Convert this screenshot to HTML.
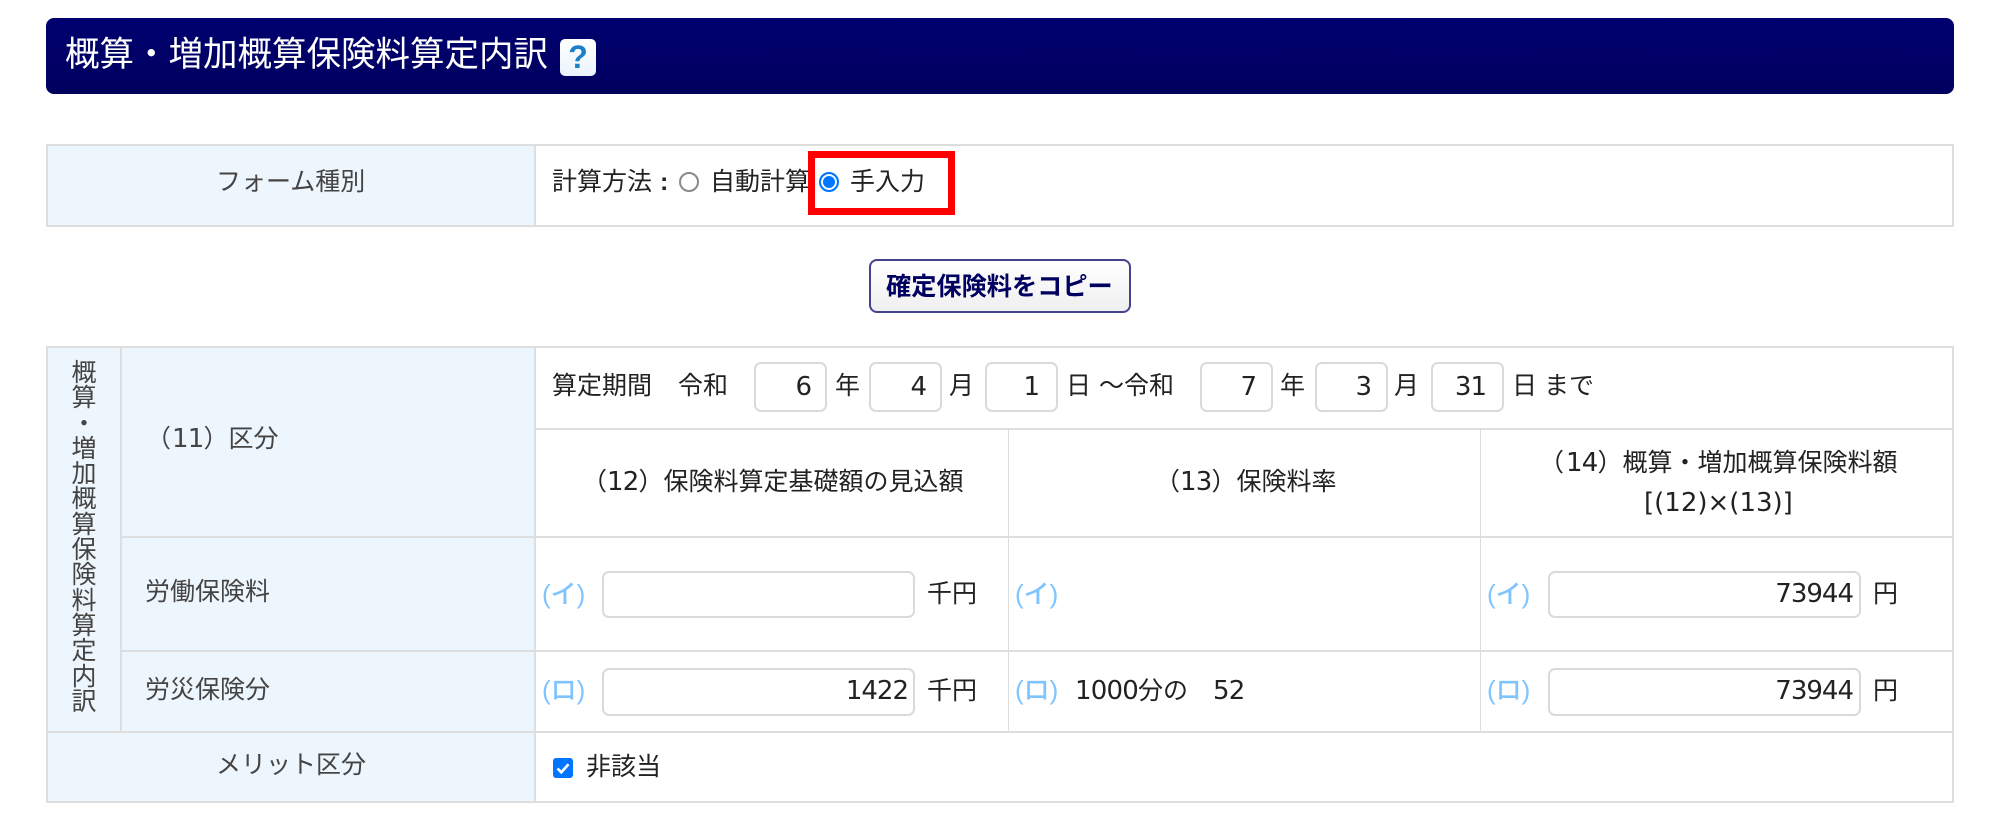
<!DOCTYPE html>
<html lang="ja">
<head>
<meta charset="utf-8">
<title>概算・増加概算保険料算定内訳</title>
<style>
html,body{margin:0;padding:0;background:#fff;width:2000px;height:825px;overflow:hidden}
body{position:relative;font-family:"Liberation Sans","Noto Sans CJK JP",sans-serif;color:#222;font-size:25px}
.t{position:absolute;line-height:40px;height:40px;white-space:pre}
.g{color:#444}
.n{font-family:"DejaVu Sans","Noto Sans CJK JP",sans-serif;font-size:26px;letter-spacing:-.8px}
.b{position:absolute;background:#dedede}
.bg{position:absolute;background:#eef6fd}
.i{position:absolute;box-sizing:border-box;background:#fff;border:2px solid #dadada;border-radius:7px}
.v{position:absolute;line-height:40px;height:40px;text-align:right;font-family:"DejaVu Sans",sans-serif;font-size:26px;letter-spacing:-1px;white-space:pre}
.l{position:absolute;line-height:40px;height:40px;color:#7fc4ff;font-size:26px;font-weight:500;white-space:pre}
</style>
</head>
<body>
<!-- header -->
<div style="position:absolute;left:46px;top:18px;width:1908px;height:76px;border-radius:8px;background:linear-gradient(#000070,#00005e)"></div>
<div class="t" style="left:65px;top:35px;color:#fff;font-size:34.5px">概算・増加概算保険料算定内訳</div>
<div style="position:absolute;left:560px;top:39px;width:36px;height:37px;border-radius:5px;background:linear-gradient(#fff,#eaf3fb);color:#1a80c8;font:bold 32px/37px 'Liberation Sans',sans-serif;text-align:center">?</div>

<!-- form type table -->
<div class="bg" style="left:46px;top:144px;width:488px;height:82px"></div>
<div class="b" style="left:46px;top:144px;width:1908px;height:2px"></div>
<div class="b" style="left:46px;top:225px;width:1908px;height:2px"></div>
<div class="b" style="left:46px;top:144px;width:2px;height:83px"></div>
<div class="b" style="left:1952px;top:144px;width:2px;height:83px"></div>
<div class="b" style="left:534px;top:144px;width:2px;height:83px;background:#d5e0e8"></div>
<div class="t g" style="left:216px;top:162px">フォーム種別</div>
<div class="t" style="left:552px;top:162px">計算方法 <span style="font-weight:700;margin-left:1px">:</span></div>
<div style="position:absolute;left:679px;top:172px;width:20px;height:20px;box-sizing:border-box;border:2px solid #8a8a8a;border-radius:50%"></div>
<div class="t" style="left:710px;top:162px">自動計算</div>
<div style="position:absolute;left:819px;top:172px;width:20px;height:20px;box-sizing:border-box;border:2px solid #0075ff;border-radius:50%;background:#0075ff;box-shadow:inset 0 0 0 2px #fff"></div>
<div class="t" style="left:850px;top:162px">手入力</div>
<div style="position:absolute;left:808px;top:151px;width:147px;height:64px;box-sizing:border-box;border:7px solid #f00"></div>

<!-- copy button -->
<div style="position:absolute;left:869px;top:259px;width:262px;height:54px;box-sizing:border-box;border:2px solid #44448e;border-radius:8px;background:linear-gradient(#fff,#efefef)"></div>
<div class="t" style="left:886px;top:267px;color:#000060;font-weight:700;font-size:25.2px">確定保険料をコピー</div>

<!-- main table backgrounds -->
<div class="bg" style="left:46px;top:346px;width:488px;height:456px"></div>
<!-- horizontal lines -->
<div class="b" style="left:46px;top:346px;width:1908px;height:2px"></div>
<div class="b" style="left:534px;top:428px;width:1420px;height:2px"></div>
<div class="b" style="left:120px;top:536px;width:1834px;height:2px"></div>
<div class="b" style="left:120px;top:650px;width:1834px;height:2px"></div>
<div class="b" style="left:46px;top:731px;width:1908px;height:2px"></div>
<div class="b" style="left:46px;top:801px;width:1908px;height:2px"></div>
<!-- vertical lines -->
<div class="b" style="left:46px;top:346px;width:2px;height:457px"></div>
<div class="b" style="left:1952px;top:346px;width:2px;height:457px"></div>
<div class="b" style="left:120px;top:346px;width:2px;height:386px"></div>
<div class="b" style="left:534px;top:346px;width:2px;height:457px;background:#d5e0e8"></div>
<div class="b" style="left:1008px;top:429px;width:1px;height:303px"></div>
<div class="b" style="left:1480px;top:429px;width:1px;height:303px"></div>

<!-- left column labels -->
<div style="position:absolute;left:71px;top:361px;width:26px;line-height:25.3px;color:#444;text-align:center">概<br>算<br>・<br>増<br>加<br>概<br>算<br>保<br>険<br>料<br>算<br>定<br>内<br>訳</div>
<div class="t g" style="left:146px;top:419px"><span style="letter-spacing:1px">（</span><span class="n">11</span>）区分</div>
<div class="t g" style="left:145px;top:572px">労働保険料</div>
<div class="t g" style="left:145px;top:670px">労災保険分</div>
<div class="t g" style="left:216px;top:745px">メリット区分</div>

<!-- period row -->
<div class="t" style="left:552px;top:366px">算定期間</div>
<div class="t" style="left:678px;top:366px">令和</div>
<div class="i" style="left:754px;top:362px;width:73px;height:50px"></div>
<div class="v" style="left:754px;top:367px;width:57px">6</div>
<div class="t" style="left:835px;top:366px">年</div>
<div class="i" style="left:869px;top:362px;width:73px;height:50px"></div>
<div class="v" style="left:869px;top:367px;width:57px">4</div>
<div class="t" style="left:949px;top:366px">月</div>
<div class="i" style="left:985px;top:362px;width:73px;height:50px"></div>
<div class="v" style="left:985px;top:367px;width:54px">1</div>
<div class="t" style="left:1066px;top:366px">日</div>
<div class="t" style="left:1099px;top:366px">～令和</div>
<div class="i" style="left:1200px;top:362px;width:73px;height:50px"></div>
<div class="v" style="left:1200px;top:367px;width:56px">7</div>
<div class="t" style="left:1280px;top:366px">年</div>
<div class="i" style="left:1315px;top:362px;width:73px;height:50px"></div>
<div class="v" style="left:1315px;top:367px;width:56px">3</div>
<div class="t" style="left:1394px;top:366px">月</div>
<div class="i" style="left:1431px;top:362px;width:73px;height:50px"></div>
<div class="v" style="left:1431px;top:367px;width:55px">31</div>
<div class="t" style="left:1512px;top:366px">日 まで</div>

<!-- headings -->
<div class="t" style="left:582px;top:462px">（<span class="n">12</span>）保険料算定基礎額の見込額</div>
<div class="t" style="left:1155px;top:462px">（<span class="n">13</span>）保険料率</div>
<div class="t" style="left:1539px;top:443px"><span style="letter-spacing:2px">（</span><span class="n">14</span>）概算・増加概算保険料額</div>
<div class="t n" style="left:1644px;top:483px;letter-spacing:0">[(12)×(13)]</div>

<!-- labour row -->
<div class="l" style="left:542px;top:574px">(イ)</div>
<div class="i" style="left:602px;top:571px;width:313px;height:47px"></div>
<div class="t" style="left:927px;top:574px">千円</div>
<div class="l" style="left:1015px;top:574px">(イ)</div>
<div class="l" style="left:1487px;top:574px">(イ)</div>
<div class="i" style="left:1548px;top:571px;width:313px;height:47px"></div>
<div class="v" style="left:1548px;top:574px;width:305px">73944</div>
<div class="t" style="left:1873px;top:574px">円</div>

<!-- accident row -->
<div class="l" style="left:542px;top:670px">(ロ)</div>
<div class="i" style="left:602px;top:668px;width:313px;height:48px"></div>
<div class="v" style="left:602px;top:671px;width:306px">1422</div>
<div class="t" style="left:927px;top:671px">千円</div>
<div class="l" style="left:1015px;top:670px">(ロ)</div>
<div class="t" style="left:1075px;top:671px"><span class="n">1000</span>分の</div>
<div class="t n" style="left:1213px;top:671px">52</div>
<div class="l" style="left:1487px;top:670px">(ロ)</div>
<div class="i" style="left:1548px;top:668px;width:313px;height:48px"></div>
<div class="v" style="left:1548px;top:671px;width:305px">73944</div>
<div class="t" style="left:1873px;top:671px">円</div>

<!-- merit row -->
<svg style="position:absolute;left:553px;top:758px" width="20" height="20" viewBox="0 0 20 20"><rect width="20" height="20" rx="3" fill="#0075ff"/><path d="M4.5 10.5l3.8 3.8 7.2-8" fill="none" stroke="#fff" stroke-width="2.6"/></svg>
<div class="t" style="left:586px;top:747px">非該当</div>
</body>
</html>
